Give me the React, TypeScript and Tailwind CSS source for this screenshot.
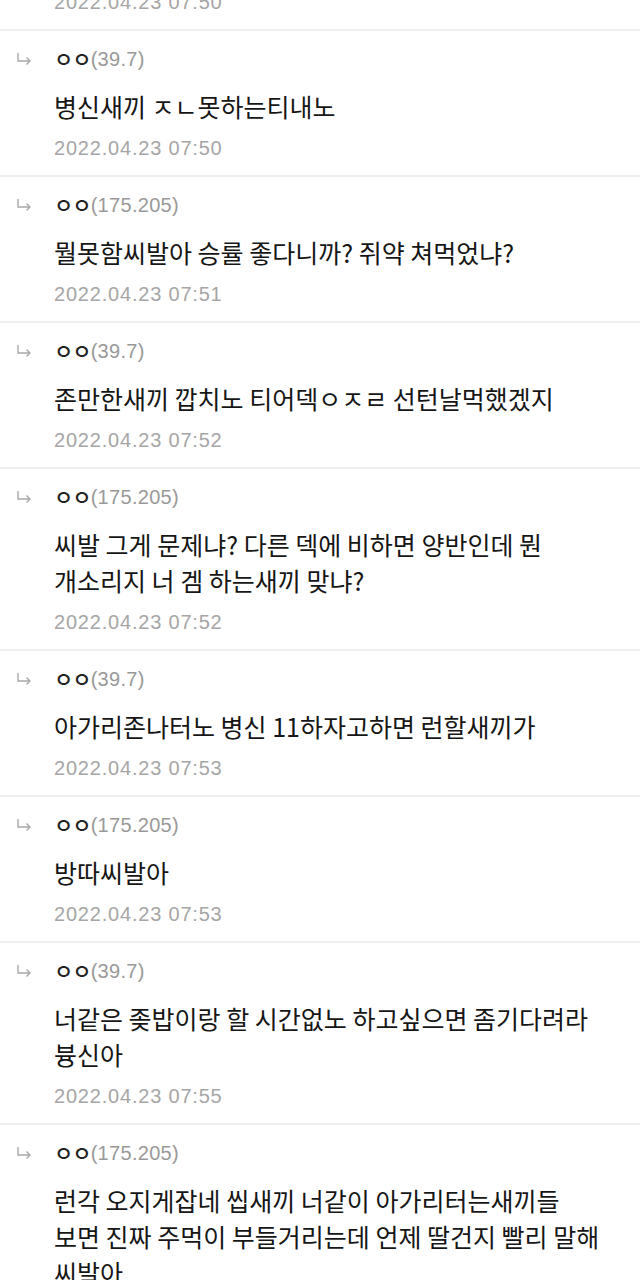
import React from 'react';

interface Reply {
  ip: string;
  lines: string[];
  date: string;
}

const replies: Reply[] = [
  { ip: '39.7', lines: ['병신새끼 ㅈㄴ못하는티내노'], date: '2022.04.23 07:50' },
  { ip: '175.205', lines: ['뭘못함씨발아 승률 좋다니까? 쥐약 쳐먹었냐?'], date: '2022.04.23 07:51' },
  { ip: '39.7', lines: ['존만한새끼 깝치노 티어덱ㅇㅈㄹ 선턴날먹했겠지'], date: '2022.04.23 07:52' },
  {
    ip: '175.205',
    lines: ['씨발 그게 문제냐? 다른 덱에 비하면 양반인데 뭔', '개소리지 너 겜 하는새끼 맞냐?'],
    date: '2022.04.23 07:52',
  },
  { ip: '39.7', lines: ['아가리존나터노 병신 11하자고하면 런할새끼가'], date: '2022.04.23 07:53' },
  { ip: '175.205', lines: ['방따씨발아'], date: '2022.04.23 07:53' },
  {
    ip: '39.7',
    lines: ['너같은 좆밥이랑 할 시간없노 하고싶으면 좀기다려라', '븅신아'],
    date: '2022.04.23 07:55',
  },
  {
    ip: '175.205',
    lines: ['런각 오지게잡네 씹새끼 너같이 아가리터는새끼들', '보면 진짜 주먹이 부들거리는데 언제 딸건지 빨리 말해', '씨발아'],
    date: '',
  },
];

const kr = { fontFamily: '"Noto Sans CJK KR", "Noto Sans", sans-serif' };
const num = { fontFamily: '"Liberation Sans", Arial, sans-serif' };

const ReplyArrow = () => (
  <svg width="16" height="14" viewBox="0 0 16 14" fill="none" stroke="#a8a8a8" strokeWidth="1.4">
    <path d="M2 1 V9 H14" />
    <path d="M10.5 5.5 L14 9 L10.5 12.5" />
  </svg>
);

const DateLine = ({ date }: { date: string }) => (
  <div className="h-[28px] leading-[28px] text-[20px] text-[#a6a6a6] tracking-[0.8px]" style={num}>
    {date}
  </div>
);

const ReplyItem = ({ reply }: { reply: Reply }) => (
  <div className="border-t-2 border-[#efefef] grid grid-cols-[54px_1fr] pt-[14px] pb-[13px]">
    <div className="h-[28px] flex items-center pl-[16px]">
      <ReplyArrow />
    </div>
    <div className="h-[28px] flex items-center">
      <span className="text-[21px] font-medium text-[#222] tracking-[-1px]" style={kr}>ㅇㅇ</span>
      <span className="text-[20px] text-[#999] tracking-[0.3px]" style={num}>({reply.ip})</span>
    </div>
    <div className="col-start-2 mt-[15px]">
      {reply.lines.map((line, i) => (
        <div key={i} className="h-[36px] leading-[36px] text-[25px] text-[#161616] whitespace-nowrap" style={kr}>
          {line}
        </div>
      ))}
    </div>
    {reply.date && (
      <div className="col-start-2 mt-[10px]">
        <DateLine date={reply.date} />
      </div>
    )}
  </div>
);

export default function App() {
  return (
    <div className="w-[640px] h-[1280px] overflow-hidden bg-white">
      {/* tail of the previous reply */}
      <div className="-mt-[12px] pb-[13px] pl-[54px]">
        <DateLine date="2022.04.23 07:50" />
      </div>
      {replies.map((r, i) => (
        <ReplyItem key={i} reply={r} />
      ))}
    </div>
  );
}
